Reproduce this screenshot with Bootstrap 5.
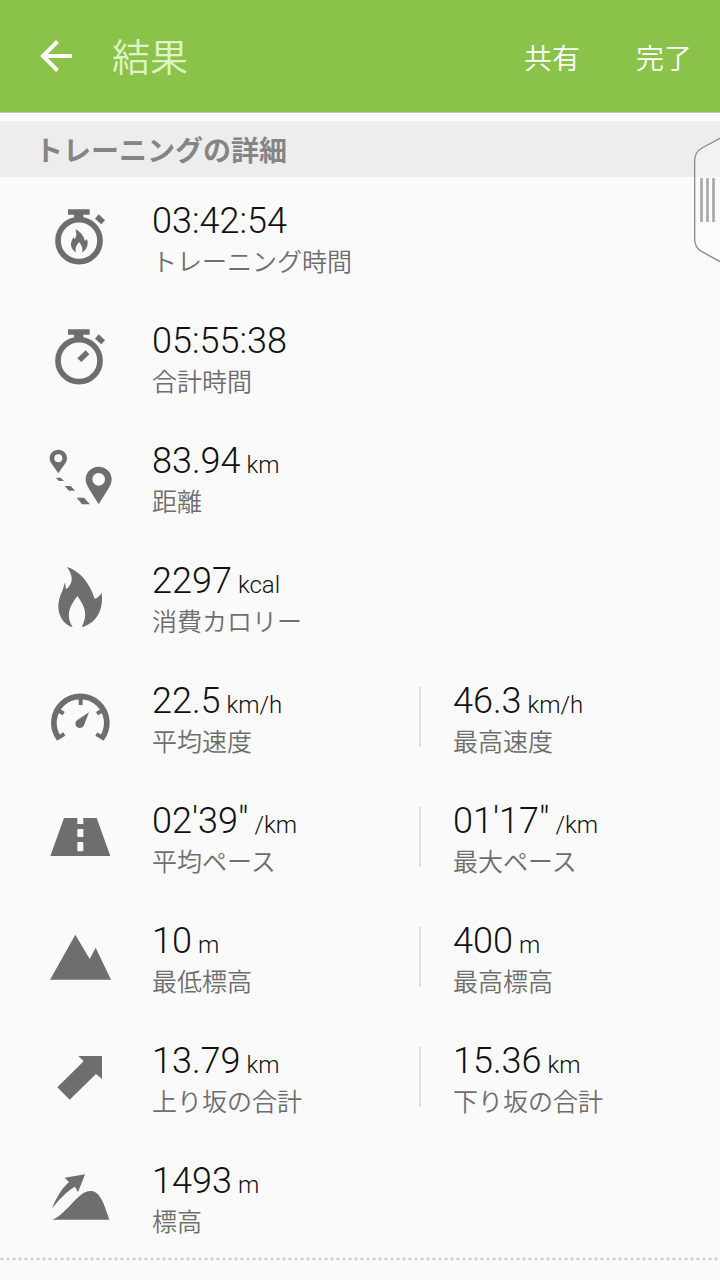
<!DOCTYPE html>
<html lang="ja">
<head>
<meta charset="utf-8">
<meta name="viewport" content="width=device-width, initial-scale=1">
<title>結果</title>
<link href="https://cdn.jsdelivr.net/npm/bootstrap@5.3.0/dist/css/bootstrap.min.css" rel="stylesheet">
<script src="https://cdn.jsdelivr.net/npm/bootstrap@5.3.0/dist/js/bootstrap.bundle.min.js"></script>
<style>
body { background: #fafafa; color: #111; font-family: Roboto, "Noto Sans CJK JP", sans-serif; }
.app-bar { background: #8bc34a; height: 113px; border-bottom: 1px solid #c4c9bd; padding: 0 28px 0 36px; }
.app-bar .btn { --bs-btn-color: #fff; --bs-btn-hover-color: #fff; --bs-btn-active-color: #fff; font-size: 28px; line-height: 40px; font-weight: 350; }
.app-title { font-size: 38px; line-height: 48px; font-weight: 350; color: #e0f3c8; margin-left: 36px; padding-top: 4px; }
.app-actions { gap: 56px; padding-top: 8px; }
.section-title { background: #ededed; color: #858585; font-size: 28px; line-height: 50px; font-weight: 700; margin-top: 8px; padding: 6px 0 0 35px; }
.stat-row { display: grid; grid-template-columns: 152px 267fr 301fr; align-items: center; height: 120px; }
.stat-icon { width: 64px; height: 64px; margin-left: 48px; fill: #6e6e6e; }
.stat-text { padding-top: 10px; }
.stat-value { font-size: 36px; line-height: 42px; font-weight: 300; }
.stat-unit { font-size: 24px; line-height: 24px; margin-left: 6px; }
.stat-label { font-size: 25px; line-height: 42px; font-weight: 350; color: #6e6e6e; }
.stat-second { position: relative; padding-left: 34px; }
.stat-second::before { content: ""; position: absolute; left: 0; top: 17px; bottom: 17px; width: 2px; background: #e0e0e0; }
.dotted-rule { height: 4px; background: radial-gradient(circle at 2px 2px, #ccc 1px, transparent 2px) 0 0 / 6px 4px repeat-x; }
.edge-handle { top: 135px; right: 0; width: 28px; height: 130px; }
</style>
</head>
<body>
<header class="app-bar d-flex align-items-center">
  <button type="button" class="btn border-0 p-0 d-flex" aria-label="戻る">
    <svg width="40" height="40" viewBox="0 0 40 40" fill="none" stroke="#fff" stroke-width="4"><path d="M36 20H7M21.500 5.500L7 20l14.500 14.500"/></svg>
  </button>
  <h1 class="app-title mb-0">結果</h1>
  <div class="app-actions d-flex ms-auto">
    <button type="button" class="btn border-0 p-0">共有</button>
    <button type="button" class="btn border-0 p-0">完了</button>
  </div>
</header>
<main>
  <h2 class="section-title mb-0">トレーニングの詳細</h2>
  <div class="stats">
    <div class="stat-row">
      <svg class="stat-icon" viewBox="24 30 192 192" aria-hidden="true"><path d="M84 43h65v16h-19v10h-28V59H84zM176 58l19 18-11 12-19-17z"/><circle cx="117" cy="137" r="63" fill="none" stroke="#6e6e6e" stroke-width="17"/><path d="M106 103c13 5 24 18 29 34 3-1 5-3 6-6 5 16 1 32-15 41 4-12-1-21-9-31-7 9-13 18-9 31-15-8-19-24-11-39l4-7 2 7c8-8 7-19 3-30z"/></svg>
      <div class="stat-text"><div class="stat-value">03:42:54</div><div class="stat-label">トレーニング時間</div></div>
    </div>
    <div class="stat-row">
      <svg class="stat-icon" viewBox="24 30 192 192" aria-hidden="true"><path d="M84 43h65v16h-19v10h-28V59H84zM176 58l19 18-11 12-19-17zM137 106l11 12-24 23-12-11z"/><circle cx="117" cy="137" r="63" fill="none" stroke="#6e6e6e" stroke-width="17"/></svg>
      <div class="stat-text"><div class="stat-value">05:55:38</div><div class="stat-label">合計時間</div></div>
    </div>
    <div class="stat-row">
      <svg class="stat-icon" viewBox="24 30 192 192" aria-hidden="true"><path fill-rule="evenodd" d="M55 44c15 0 26 11 26 26 0 12-10 21-26 45-16-24-26-33-26-45 0-15 11-26 26-26zm0 14a12 12 0 1 0 0 24 12 12 0 0 0 0-24zM176 95c22 0 39 17 39 38 0 18-13 32-39 75-26-43-39-57-39-75 0-21 17-38 39-38zm0 19a19 19 0 1 0 0 38 19 19 0 0 0 0-38zM47 128h15l10 10H57zM74 153h18l13 14H87zM110 188h22l18 20h-24z"/></svg>
      <div class="stat-text"><div class="stat-value">83.94<span class="stat-unit">km</span></div><div class="stat-label">距離</div></div>
    </div>
    <div class="stat-row">
      <svg class="stat-icon" viewBox="24 30 192 192" aria-hidden="true"><path d="M81 36c39 12 67 47 83 95 9-2 15-8 21-18 5 43-7 87-60 104 18-37 13-58-13-94-27 36-34 59-14 94-47-17-52-69-31-109L75 82l3 21c25-19 20-43 3-67z"/></svg>
      <div class="stat-text"><div class="stat-value">2297<span class="stat-unit">kcal</span></div><div class="stat-label">消費カロリー</div></div>
    </div>
    <div class="stat-row">
      <svg class="stat-icon" viewBox="24 30 192 192" aria-hidden="true"><path d="M58 192A79.500 79.500 0 1 1 184 192" fill="none" stroke="#6e6e6e" stroke-width="17"/><path d="M116 68h12v22h-12zM60 102l14 9-6 10-14-8zM182 102l-14 9 6 10 14-8zM70 172l6 10-21 13-6-9zM172 172l-6 10 21 13 6-9zM147 112l-15 39c-5 10-15 10-21 5-7-6-6-16 1-21z"/></svg>
      <div class="stat-text"><div class="stat-value">22.5<span class="stat-unit">km/h</span></div><div class="stat-label">平均速度</div></div>
      <div class="stat-text stat-second"><div class="stat-value">46.3<span class="stat-unit">km/h</span></div><div class="stat-label">最高速度</div></div>
    </div>
    <div class="stat-row">
      <svg class="stat-icon" viewBox="24 30 192 192" aria-hidden="true"><path fill-rule="evenodd" d="M72 69h40v18h18V69h40l41 114H31zM112 104v20q0 2 2 2h14q2 0 2-2v-20q0-2-2-2h-14q-2 0-2 2zM112 143v24q0 2 2 2h14q2 0 2-2v-24q0-2-2-2h-14q-2 0-2 2z"/></svg>
      <div class="stat-text"><div class="stat-value">02'39"<span class="stat-unit">/km</span></div><div class="stat-label">平均ペース</div></div>
      <div class="stat-text stat-second"><div class="stat-value">01'17"<span class="stat-unit">/km</span></div><div class="stat-label">最大ペース</div></div>
    </div>
    <div class="stat-row">
      <svg class="stat-icon" viewBox="24 30 192 192" aria-hidden="true"><path d="M30 194l76-135 43 73 18-34 46 96z"/></svg>
      <div class="stat-text"><div class="stat-value">10<span class="stat-unit">m</span></div><div class="stat-label">最低標高</div></div>
      <div class="stat-text stat-second"><div class="stat-value">400<span class="stat-unit">m</span></div><div class="stat-label">最高標高</div></div>
    </div>
    <div class="stat-row">
      <svg class="stat-icon" viewBox="24 30 192 192" aria-hidden="true"><path d="M115 63h71v69l-18-15-79 77-37-37 79-78z"/></svg>
      <div class="stat-text"><div class="stat-value">13.79<span class="stat-unit">km</span></div><div class="stat-label">上り坂の合計</div></div>
      <div class="stat-text stat-second"><div class="stat-value">15.36<span class="stat-unit">km</span></div><div class="stat-label">下り坂の合計</div></div>
    </div>
    <div class="stat-row">
      <svg class="stat-icon" viewBox="24 30 192 192" aria-hidden="true"><path d="M135 58l-21 54-9-17c-25 14-45 36-69 65 13-32 28-58 51-79l-13-13zM38 194c37-17 58-56 92-80 21-12 41-7 54 18 10 18 15 37 24 62z"/></svg>
      <div class="stat-text"><div class="stat-value">1493<span class="stat-unit">m</span></div><div class="stat-label">標高</div></div>
    </div>
    <div class="dotted-rule"></div>
  </div>
</main>
<svg class="edge-handle position-absolute" viewBox="636 405 84 390" aria-hidden="true"><path d="M722 414L666 444Q644 456 644 484V716Q644 744 666 755L722 786" fill="#fff" fill-opacity=".3" stroke="#8c8c8c" stroke-width="4"/><path d="M664.500 534V666M682.500 534V666M700.500 534V666" stroke="#a8a8a8" stroke-width="8" fill="none"/></svg>
</body>
</html>
